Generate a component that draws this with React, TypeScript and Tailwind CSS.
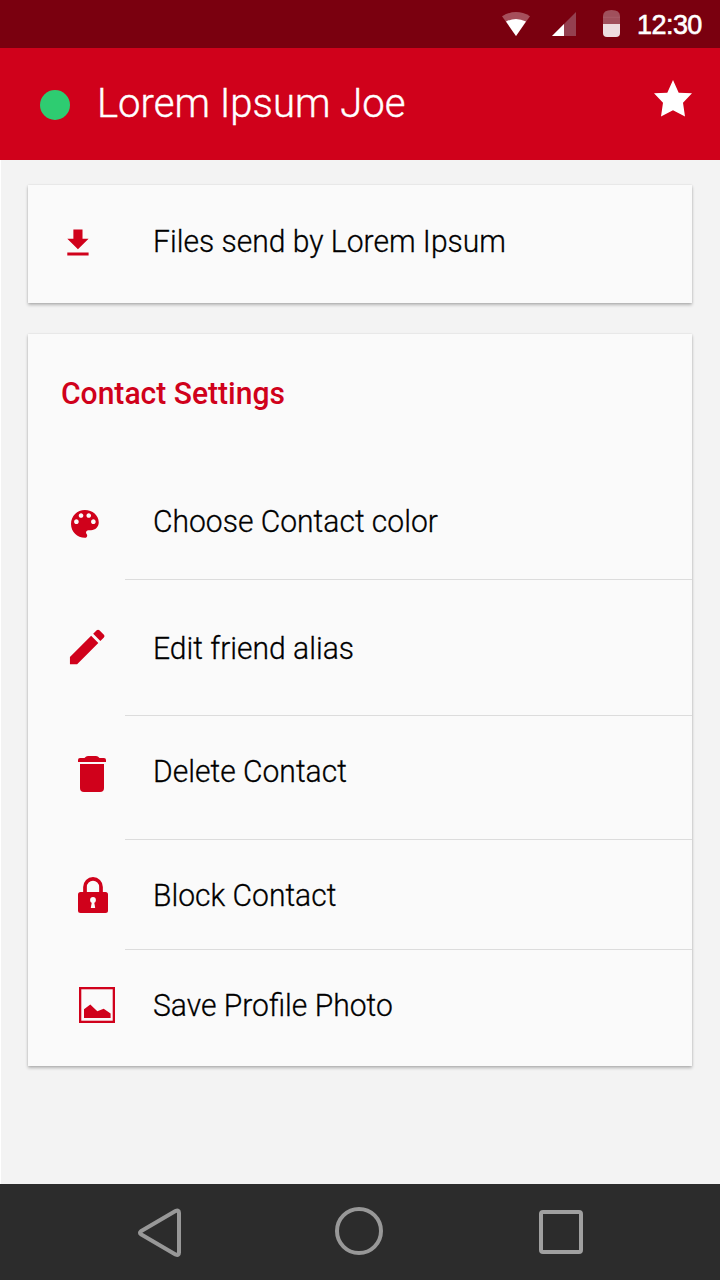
import type { ReactNode } from "react";

function StatusBar() {
  return (
    <div className="flex h-12 w-full items-start bg-[#7a000f] pl-[502px]">
      <svg className="mt-[11px] h-[26px] w-7 shrink-0" viewBox="0 0 28 26">
        <path d="M0 5.2Q14-3 28 5.2L14 25Z" fill="#a64f5b" />
        <path d="M4 10.6Q14 5.2 24 10.6L14 25Z" fill="#fff" />
      </svg>
      <svg className="ml-[22px] mt-3 h-6 w-6 shrink-0" viewBox="0 0 24 24">
        <path d="M0 24L24 0V24Z" fill="#944050" />
        <path d="M0 24L12 12V24Z" fill="#fff" />
      </svg>
      <svg className="ml-[27px] mt-[10px] h-[27px] w-[17px] shrink-0" viewBox="0 0 17 27">
        <path d="M0 14V6Q0 0 8.5 0T17 6V14Z" fill="#a0505c" />
        <path d="M0 7.3H17" stroke="#aa606b" strokeWidth="0.8" />
        <path d="M0 14H17V23Q17 27 13 27H4Q0 27 0 23Z" fill="#eddde0" />
      </svg>
      <span className="ml-[17px] mt-[9px] font-['Liberation_Sans',Arial,sans-serif] text-[27px] leading-[32px] tracking-[-0.55px] text-white [-webkit-text-stroke:0.6px_white]">
        12:30
      </span>
    </div>
  );
}

function Header() {
  return (
    <header className="flex h-28 items-start bg-[#d0011b]">
      <span className="ml-10 mt-[42px] size-[30px] rounded-full bg-[#2ecc71]" />
      <h1 className="ml-[27px] mt-[31px] grow origin-left scale-x-[0.977] whitespace-nowrap text-[41px] font-light leading-[48px] text-white [-webkit-text-stroke:0.4px_white]">
        Lorem Ipsum Joe
      </h1>
      <svg className="mr-7 mt-8 h-[37px] w-[38px]" viewBox="0 0 38 37" fill="#fff">
        <path d="M19 0L24.7 12.8L38 13.2L29 22.8L31 36.5L19 30.2L7 36.5L9 22.8L0 13.2L13.3 12.8Z" />
      </svg>
    </header>
  );
}

interface ItemProps {
  height: string;
  icon: ReactNode;
  label: string;
  top: string;
  divider?: boolean;
}

function Item({ height, icon, label, top, divider = true }: ItemProps) {
  return (
    <li className={`flex items-stretch ${height}`}>
      <div className="w-[97px] shrink-0">{icon}</div>
      <div
        className={`grow whitespace-nowrap pl-7 text-[31px] font-light leading-9 text-black [-webkit-text-stroke:0.3px_black] ${top} ${divider ? "border-b border-[#dcdcdc]" : ""}`}
      >
        <span className="block origin-left scale-x-[0.969]">{label}</span>
      </div>
    </li>
  );
}

const cardShadow = "shadow-[0_2px_3px_rgba(0,0,0,0.26),0_0_2px_rgba(0,0,0,0.1)]";

const downloadIcon = (
  <svg className="ml-8 mt-[39.7px] size-[36.5px]" viewBox="0.2 0 24 24" fill="#d0011b">
    <path d="M19 9h-4V3H9v6H5l7 7 7-7zM5 18v2h14v-2H5z" />
  </svg>
);

const paletteIcon = (
  <svg className="ml-[38px] mt-[42px] size-[37px]" viewBox="-0.25 -0.3 24 24" fill="#d0011b">
    <path d="M12 3c-4.97 0-9 4.03-9 9s4.03 9 9 9c.83 0 1.5-.67 1.5-1.5 0-.39-.15-.74-.39-1.01-.23-.26-.38-.61-.38-.99 0-.83.67-1.5 1.5-1.5H16c2.76 0 5-2.24 5-5 0-4.42-4.03-8-9-8zm-5.5 9c-.83 0-1.5-.67-1.5-1.5S5.67 9 6.5 9 8 9.67 8 10.5 7.33 12 6.5 12zm3-4C8.67 8 8 7.33 8 6.5S8.67 5 9.5 5s1.5.67 1.5 1.5S10.33 8 9.5 8zm5 0c-.83 0-1.5-.67-1.5-1.5S13.67 5 14.5 5s1.5.67 1.5 1.5S15.33 8 14.5 8zm3 4c-.83 0-1.5-.67-1.5-1.5S16.67 9 17.5 9s1.5.67 1.5 1.5-.67 1.5-1.5 1.5z" />
  </svg>
);

const pencilIcon = (
  <svg className="ml-9 mt-11 size-[46px]" viewBox="-0.1 0 24 24" fill="#d0011b">
    <path d="M3 17.25V21h3.75L17.81 9.94l-3.75-3.75L3 17.25zM20.71 7.04c.39-.39.39-1.02 0-1.41l-2.34-2.34c-.39-.39-1.02-.39-1.41 0l-1.83 1.83 3.75 3.75 1.83-1.83z" />
  </svg>
);

const trashIcon = (
  <svg className="ml-[50px] mt-10 h-9 w-7" viewBox="0 0 28 36" fill="#d0011b">
    <path d="M0 6V4Q0 2 2 2H6.5Q8 0 10 0H18Q20 0 21.5 2H26Q28 2 28 4V6Z" />
    <path d="M2 8H26V32Q26 36 22 36H6Q2 36 2 32Z" />
  </svg>
);

const lockIcon = (
  <svg className="ml-[50px] mt-[37px] h-9 w-[30px]" viewBox="0 0 30 36">
    <path d="M7 16V10A8 8.1 0 0 1 23 10V16" fill="none" stroke="#d0011b" strokeWidth="3.7" />
    <rect y="15" width="30" height="21" rx="2.5" fill="#d0011b" />
    <circle cx="15" cy="23" r="2.9" fill="#fafafa" />
    <path d="M14 24H16L17.2 31H12.8Z" fill="#fafafa" />
  </svg>
);

const photoIcon = (
  <svg className="ml-[51px] mt-[37px] size-9" viewBox="0 0 36 36">
    <rect x="1.15" y="1.15" width="33.7" height="33.7" fill="none" stroke="#d0011b" strokeWidth="2.3" />
    <path d="M5 31V22.2L11.3 17.5L18.3 24.2L24.7 21.8L31.6 26.4V31Z" fill="#d0011b" />
  </svg>
);

function NavBar() {
  return (
    <nav className="flex h-24 items-start bg-[#2c2c2c] pl-[137px]">
      <svg className="mt-6 h-[49px] w-[45px]" viewBox="0 0 45 49" fill="none">
        <path
          d="M3.9 23.2L38.5 3.1Q42 1.5 42 5V44.5Q42 48 38.5 46.4L3.9 26.2Q2 24.7 3.9 23.2Z"
          stroke="#989898"
          strokeWidth="4"
          strokeLinejoin="round"
        />
      </svg>
      <span className="ml-[153px] mt-[23px] size-12 rounded-full border-4 border-[#989898]" />
      <span className="ml-[156px] mt-[26px] size-11 rounded-[4px] border-4 border-[#a0a0a0]" />
    </nav>
  );
}

export default function App() {
  return (
    <div className="flex h-[1280px] w-[720px] flex-col overflow-hidden bg-[#f3f3f3] font-[Roboto,sans-serif]">
      <StatusBar />
      <Header />
      <main className="flex grow flex-col border-l border-white pl-[27px] pr-7 pt-[25px]">
        <ul className={`bg-[#fafafa] ${cardShadow}`}>
          <Item height="h-[118px]" icon={downloadIcon} label="Files send by Lorem Ipsum" top="pt-[39px]" divider={false} />
        </ul>
        <section className={`mt-[31px] h-[732px] bg-[#fafafa] ${cardShadow}`}>
          <h2 className="h-[129px] whitespace-nowrap pl-[33px] pt-[42px] text-[31px] font-medium leading-9 text-[#d0011b]">
            <span className="block origin-left scale-x-[0.969]">Contact Settings</span>
          </h2>
          <ul>
            <Item height="h-[117px]" icon={paletteIcon} label="Choose Contact color" top="pt-[41px]" />
            <Item height="h-[136px]" icon={pencilIcon} label="Edit friend alias" top="pt-[51px]" />
            <Item height="h-[124px]" icon={trashIcon} label="Delete Contact" top="pt-[38px]" />
            <Item height="h-[110px]" icon={lockIcon} label="Block Contact" top="pt-[38px]" />
            <Item height="h-[116px]" icon={photoIcon} label="Save Profile Photo" top="pt-[38px]" divider={false} />
          </ul>
        </section>
      </main>
      <NavBar />
    </div>
  );
}
